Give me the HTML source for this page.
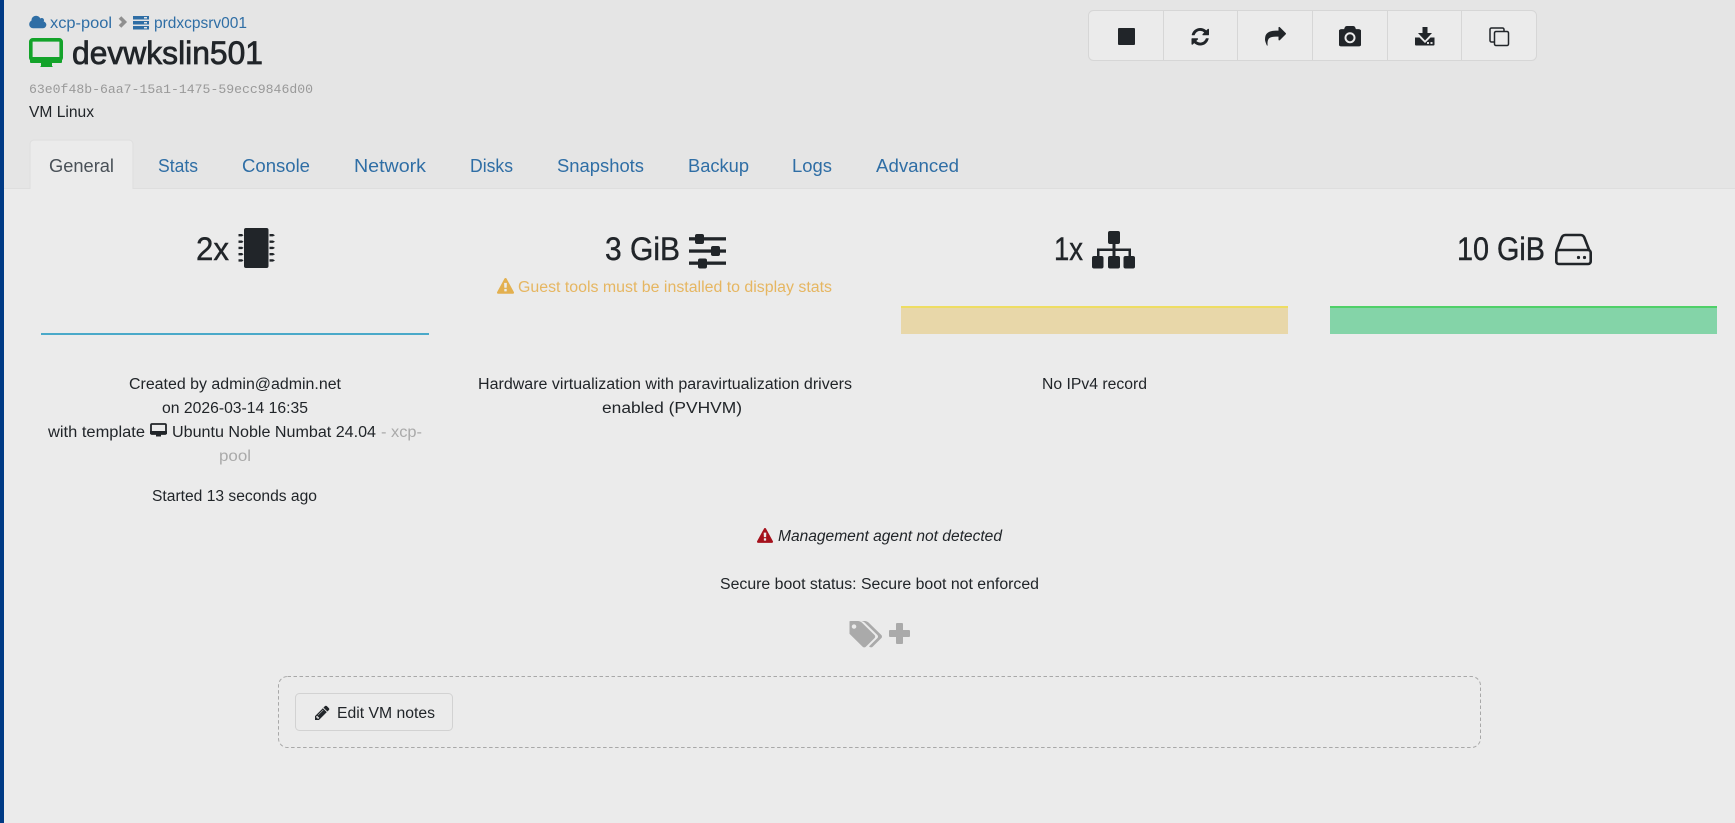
<!DOCTYPE html>
<html lang="en"><head><meta charset="utf-8"><title>devwkslin501</title>
<style>
html,body{margin:0;padding:0;width:1735px;height:823px;overflow:hidden;background:#ebebeb}
svg{display:block}
text{font-family:"Liberation Sans",sans-serif;fill:#212529;font-size:15.5px}
.l{fill:#2f6ea5}
.t{font-size:18px}
.s{font-size:32px;stroke:#212529;stroke-width:.4}
</style></head><body>
<svg width="1735" height="823" viewBox="0 0 1735 823" xmlns="http://www.w3.org/2000/svg">
<rect width="1735" height="823" fill="#ebebeb"/>
<rect width="1735" height="188" fill="#e5e5e5"/>
<rect y="188" width="1735" height="1" fill="#dedede"/>
<rect width="4" height="823" fill="#003a85"/>

<!-- breadcrumb -->
<svg x="29" y="14" width="17.500" height="16" viewBox="0 0 1920 1792"><path fill="#2f6ea5" d="M1920 1216q0 159-112.500 271.500t-271.500 112.500h-1088q-185 0-316.500-131.500t-131.500-316.500q0-132 71-241.500t187-163.500q-2-28-2-43 0-212 150-362t362-150q158 0 286.500 88t187.500 230q70-62 166-62 106 0 181 75t75 181q0 75-41 138 129 30 213 134.500t84 239.500z"/></svg>
<text x="50" y="28" class="l" textLength="62" lengthAdjust="spacingAndGlyphs">xcp-pool</text>
<polyline points="120,17.500 124.500,22 120,26.500" fill="none" stroke="#8f8f8f" stroke-width="3.600"/>
<g fill="#2f6ea5"><rect x="133" y="16" width="16" height="3.500"/><rect x="133" y="21" width="16" height="3.500"/><rect x="133" y="26" width="16" height="3.500"/></g>
<g fill="#e5e5e5"><rect x="144" y="17" width="3" height="1.500"/><rect x="144" y="22" width="3" height="1.500"/><rect x="144" y="27" width="3" height="1.500"/></g>
<text x="154" y="28" class="l" textLength="93" lengthAdjust="spacingAndGlyphs">prdxcpsrv001</text>

<!-- title -->
<rect x="30.800" y="39.800" width="30.400" height="20" rx="2" fill="none" stroke="#13a32a" stroke-width="3.600"/>
<rect x="30" y="57" width="32" height="6" rx="1" fill="#13a32a"/>
<path d="M41 63h11v3l1 1H40l1-1z" fill="#13a32a"/>
<text x="72" y="64" class="s" style="stroke-width:.75" textLength="191" lengthAdjust="spacingAndGlyphs">devwkslin501</text>
<text x="29" y="93" style="font-family:'Liberation Mono',monospace;font-size:13.100px;fill:#999" textLength="284" lengthAdjust="spacingAndGlyphs">63e0f48b-6aa7-15a1-1475-59ecc9846d00</text>
<text x="29" y="117" textLength="65" lengthAdjust="spacingAndGlyphs">VM Linux</text>

<!-- tabs -->
<path d="M30 188.500V144a4 4 0 0 1 4-4h95a4 4 0 0 1 4 4v44.500" fill="#ebebeb" stroke="#dedede"/>
<rect x="30.500" y="187" width="102" height="3" fill="#ebebeb"/>
<text x="49" y="172" class="t" style="fill:#495057" textLength="65" lengthAdjust="spacingAndGlyphs">General</text>
<text x="158" y="172" class="t l" textLength="40" lengthAdjust="spacingAndGlyphs">Stats</text>
<text x="242" y="172" class="t l" textLength="68" lengthAdjust="spacingAndGlyphs">Console</text>
<text x="354" y="172" class="t l" textLength="72" lengthAdjust="spacingAndGlyphs">Network</text>
<text x="470" y="172" class="t l" textLength="43" lengthAdjust="spacingAndGlyphs">Disks</text>
<text x="557" y="172" class="t l" textLength="87" lengthAdjust="spacingAndGlyphs">Snapshots</text>
<text x="688" y="172" class="t l" textLength="61" lengthAdjust="spacingAndGlyphs">Backup</text>
<text x="792" y="172" class="t l" textLength="40" lengthAdjust="spacingAndGlyphs">Logs</text>
<text x="876" y="172" class="t l" textLength="83" lengthAdjust="spacingAndGlyphs">Advanced</text>

<!-- toolbar -->
<rect x="1088.500" y="10.500" width="448" height="50" rx="5" fill="#ebebeb" stroke="#d6d6d6"/>
<g fill="#d6d6d6"><rect x="1163" y="11" width="1" height="49"/><rect x="1237" y="11" width="1" height="49"/><rect x="1312" y="11" width="1" height="49"/><rect x="1387" y="11" width="1" height="49"/><rect x="1461" y="11" width="1" height="49"/></g>
<rect x="1118" y="28" width="17" height="17" rx="1" fill="#212529"/>
<svg x="1191.500" y="28" width="17.500" height="17.500" viewBox="128 128 1536 1536"><path fill="#212529" d="M1639 1056q0 5-1 7-64 268-268 434.500t-478 166.500q-146 0-282.500-55t-243.500-157l-129 129q-19 19-45 19t-45-19-19-45v-448q0-26 19-45t45-19h448q26 0 45 19t19 45-19 45l-137 137q71 66 161 102t187 36q134 0 250-65t186-179q11-17 53-117 8-23 30-23h192q13 0 22.500 9.500t9.500 22.500zm25-800v448q0 26-19 45t-45 19h-448q-26 0-45-19t-19-45 19-45l138-138q-148-137-349-137-134 0-250 65t-186 179q-11 17-53 117-8 23-30 23h-199q-13 0-22.500-9.500t-9.500-22.500v-7q65-268 270-434.500t480-166.500q146 0 284 55.500t245 156.500l130-129q19-19 45-19t45 19 19 45z"/></svg>
<svg x="1265" y="25" width="21" height="21" viewBox="0 0 1792 1792"><path fill="#212529" d="M1792 640q0 26-19 45l-512 512q-19 19-45 19t-45-19-19-45v-256h-224q-98 0-175.500 6t-154 21.500-133 42.500-105.500 69.500-80 101-48.500 138.500-17.500 181q0 55 5 123 0 6 2.500 23.500t2.500 26.500q0 15-8.500 25t-23.500 10q-16 0-28-17-7-9-13-22t-13.500-30-10.500-24q-127-285-127-451 0-199 53-333 162-403 875-403h224v-256q0-26 19-45t45-19 45 19l512 512q19 19 19 45z" transform="translate(0 100)"/></svg>
<svg x="1339" y="26" width="22" height="22" viewBox="0 0 1792 1792"><path fill="#212529" d="M896 672q119 0 203.500 84.500t84.500 203.500-84.500 203.500-203.500 84.500-203.500-84.500-84.500-203.500 84.500-203.500 203.500-84.500zm704-416q106 0 181 75t75 181v896q0 106-75 181t-181 75h-1408q-106 0-181-75t-75-181v-896q0-106 75-181t181-75h224l51-136q19-49 69.500-84.500t103.500-35.500h512q53 0 103.500 35.500t69.500 84.500l51 136h224zm-704 1152q185 0 316.500-131.500t131.500-316.500-131.500-316.500-316.500-131.500-316.500 131.500-131.500 316.500 131.500 316.500 316.500 131.500z"/></svg>
<path d="M1422.500 27h5v6h4.500l-7 7.500-7-7.500h4.500z" fill="#212529"/>
<path d="M1415 37.500h4.500l5.500 5.500 5.500-5.500h4v7a1 1 0 0 1-1 1h-17.500a1 1 0 0 1-1-1z" fill="#212529"/>
<rect x="1427" y="42" width="2" height="2" fill="#ddd"/><rect x="1430.500" y="42" width="2" height="2" fill="#ddd"/>
<rect x="1490" y="28" width="14" height="14" rx="1.500" fill="none" stroke="#212529" stroke-width="1.500"/>
<rect x="1494.500" y="31.500" width="14" height="14" rx="1.500" fill="#ebebeb" stroke="#212529" stroke-width="1.500"/>

<!-- stats headers -->
<text x="196" y="260" class="s" textLength="33" lengthAdjust="spacingAndGlyphs">2x</text>
<rect x="244" y="228" width="24.500" height="40" rx="2" fill="#212529"/>
<g fill="#212529"><path d="M238.500 234h3.500l1.500 1.200-1.500 1.200h-3.500z"/><path d="M238.500 240.500h3.500l1.500 1.200-1.500 1.200h-3.500z"/><path d="M238.500 246.700h3.500l1.500 1.200-1.500 1.200h-3.500z"/><path d="M238.500 253h3.500l1.500 1.200-1.500 1.200h-3.500z"/><path d="M238.500 259.200h3.500l1.500 1.200-1.500 1.200h-3.500z"/>
<path d="M269.500 234h3.500l2 1.200-2 1.200h-3.500z"/><path d="M269.500 240.500h3.500l2 1.200-2 1.200h-3.500z"/><path d="M269.500 246.700h3.500l2 1.200-2 1.200h-3.500z"/><path d="M269.500 253h3.500l2 1.200-2 1.200h-3.500z"/><path d="M269.500 259.200h3.500l2 1.200-2 1.200h-3.500z"/></g>

<text x="605" y="260" class="s" textLength="75" lengthAdjust="spacingAndGlyphs">3 GiB</text>
<g fill="#212529"><rect x="689" y="237.200" width="37" height="3.300"/><rect x="689" y="249.400" width="37" height="3.300"/><rect x="689" y="261.500" width="37" height="3.300"/>
<rect x="695" y="234" width="9" height="10" rx="2"/><rect x="711" y="246" width="9" height="10" rx="2"/><rect x="698" y="258.500" width="9" height="10" rx="2"/></g>
<g fill="#e3b04f"><svg x="497" y="278" width="17" height="17" viewBox="0 0 1792 1792"><path d="M1024 1375v-190q0-14-9.500-23.500t-22.500-9.500h-192q-13 0-22.500 9.500t-9.500 23.500v190q0 14 9.500 23.500t22.500 9.500h192q13 0 22.500-9.500t9.500-23.500zm-2-374l18-459q0-12-10-19-13-11-24-11h-220q-11 0-24 11-10 7-10 21l17 457q0 10 10 16.500t24 6.500h185q14 0 23.500-6.500t10.500-16.500zm-14-934l768 1408q35 63-2 126-17 29-46.500 46t-63.500 17h-1536q-34 0-63.500-17t-46.500-46q-37-63-2-126l768-1408q17-31 47-49t65-18 65 18 47 49z"/></svg></g>
<text x="518" y="292" style="fill:#e6b661" textLength="314" lengthAdjust="spacingAndGlyphs">Guest tools must be installed to display stats</text>

<text x="1054" y="260" class="s" textLength="29" lengthAdjust="spacingAndGlyphs">1x</text>
<g fill="#212529"><rect x="1108" y="231" width="12" height="13" rx="2"/><rect x="1092" y="256" width="11.500" height="12.500" rx="2"/><rect x="1108" y="256" width="12" height="12.500" rx="2"/><rect x="1123.500" y="256" width="11.500" height="12.500" rx="2"/>
<rect x="1112.500" y="243" width="3" height="14"/><rect x="1097" y="248.500" width="34" height="2.500"/><rect x="1097" y="249" width="2.500" height="8"/><rect x="1128.500" y="249" width="2.500" height="8"/></g>

<text x="1457" y="260" class="s" textLength="88" lengthAdjust="spacingAndGlyphs">10 GiB</text>
<path d="M1556.500 251l5-13q1-3 4-3h15q3 0 4 3l5 13" fill="none" stroke="#212529" stroke-width="2.600"/>
<rect x="1556.300" y="250" width="34.400" height="14" rx="2.500" fill="none" stroke="#212529" stroke-width="2.600"/>
<circle cx="1578.500" cy="257.500" r="1.600" fill="#212529"/><circle cx="1584.500" cy="257.500" r="1.600" fill="#212529"/>

<!-- bars -->
<rect x="41" y="333" width="388" height="2" fill="#4aa9c9"/>
<rect x="901" y="306" width="387" height="28" fill="#e8d7a9"/>
<rect x="901" y="306" width="387" height="2" fill="#eedd62"/>
<rect x="1330" y="306" width="387" height="28" fill="#84d4a8"/>
<rect x="1330" y="306" width="387" height="2" fill="#4fd068"/>

<!-- details -->
<text x="129" y="389" textLength="212" lengthAdjust="spacingAndGlyphs">Created by admin@admin.net</text>
<text x="162" y="413" textLength="146" lengthAdjust="spacingAndGlyphs">on 2026-03-14 16:35</text>
<text x="48" y="437" textLength="97" lengthAdjust="spacingAndGlyphs">with template</text>
<rect x="151" y="424" width="15" height="10" rx="1" fill="none" stroke="#212529" stroke-width="1.800"/>
<rect x="150" y="431" width="17" height="3" fill="#212529"/>
<rect x="156" y="434" width="5" height="2.500" fill="#212529"/>
<text x="172" y="437" textLength="204" lengthAdjust="spacingAndGlyphs">Ubuntu Noble Numbat 24.04</text>
<text x="381" y="437" style="fill:#aaa" textLength="41" lengthAdjust="spacingAndGlyphs">- xcp-</text>
<text x="219" y="461" style="fill:#aaa" textLength="32" lengthAdjust="spacingAndGlyphs">pool</text>
<text x="152" y="501" textLength="165" lengthAdjust="spacingAndGlyphs">Started 13 seconds ago</text>
<text x="478" y="389" textLength="374" lengthAdjust="spacingAndGlyphs">Hardware virtualization with paravirtualization drivers</text>
<text x="602" y="413" textLength="140" lengthAdjust="spacingAndGlyphs">enabled (PVHVM)</text>
<text x="1042" y="389" textLength="105" lengthAdjust="spacingAndGlyphs">No IPv4 record</text>

<svg x="757" y="528" width="16" height="16" viewBox="0 0 1792 1792"><path fill="#a5111c" d="M1024 1375v-190q0-14-9.500-23.500t-22.500-9.500h-192q-13 0-22.500 9.500t-9.500 23.500v190q0 14 9.500 23.500t22.500 9.500h192q13 0 22.500-9.500t9.500-23.500zm-2-374l18-459q0-12-10-19-13-11-24-11h-220q-11 0-24 11-10 7-10 21l17 457q0 10 10 16.500t24 6.500h185q14 0 23.500-6.500t10.500-16.500zm-14-934l768 1408q35 63-2 126-17 29-46.500 46t-63.500 17h-1536q-34 0-63.500-17t-46.500-46q-37-63-2-126l768-1408q17-31 47-49t65-18 65 18 47 49z"/></svg>
<text x="778" y="541" style="font-style:italic" textLength="224" lengthAdjust="spacingAndGlyphs">Management agent not detected</text>
<text x="720" y="589" textLength="319" lengthAdjust="spacingAndGlyphs">Secure boot status: Secure boot not enforced</text>

<svg x="849.500" y="621" width="34" height="29" viewBox="0 128 1920 1664" preserveAspectRatio="none"><path fill="#aaa" d="M384 448q0-53-37.500-90.500t-90.500-37.500-90.500 37.500-37.500 90.500 37.500 90.500 90.500 37.500 90.500-37.500 37.500-90.500zm1067 576q0 53-37 90l-491 492q-39 37-91 37-53 0-90-37l-715-716q-38-37-64.500-101t-26.500-117v-416q0-52 38-90t90-38h416q53 0 117 26.500t102 64.500l715 714q37 39 37 91zm384 0q0 53-37 90l-491 492q-39 37-91 37-36 0-59-14t-53-45l470-470q37-37 37-90 0-52-37-91l-715-714q-38-38-102-64.500t-117-26.500h224q53 0 117 26.500t102 64.500l715 714q37 39 37 91z"/></svg>
<rect x="889" y="630" width="21" height="7" rx="1" fill="#aaa"/><rect x="896" y="623" width="7" height="21" rx="1" fill="#aaa"/>

<!-- notes -->
<rect x="278.500" y="676.500" width="1202" height="71" rx="9" fill="none" stroke="#a8a8a8" stroke-dasharray="3.500 2.500"/>
<rect x="295.500" y="693.500" width="157" height="37" rx="4" fill="#ebebeb" stroke="#d2d2d2"/>
<svg x="315" y="705.500" width="14.500" height="14.500" viewBox="128 128 1536 1536"><path fill="#212529" d="M491 1536l91-91-235-235-91 91v107h128v128h107zm523-928q0-22-22-22-10 0-17 7l-542 542q-7 7-7 17 0 22 22 22 10 0 17-7l542-542q7-7 7-17zm-54-192l416 416-832 832h-416v-416zm683 96q0 53-37 90l-166 166-416-416 166-165q36-38 90-38 53 0 91 38l235 234q37 39 37 91z"/></svg>
<text x="337" y="718" textLength="98" lengthAdjust="spacingAndGlyphs">Edit VM notes</text>
</svg>
</body></html>
